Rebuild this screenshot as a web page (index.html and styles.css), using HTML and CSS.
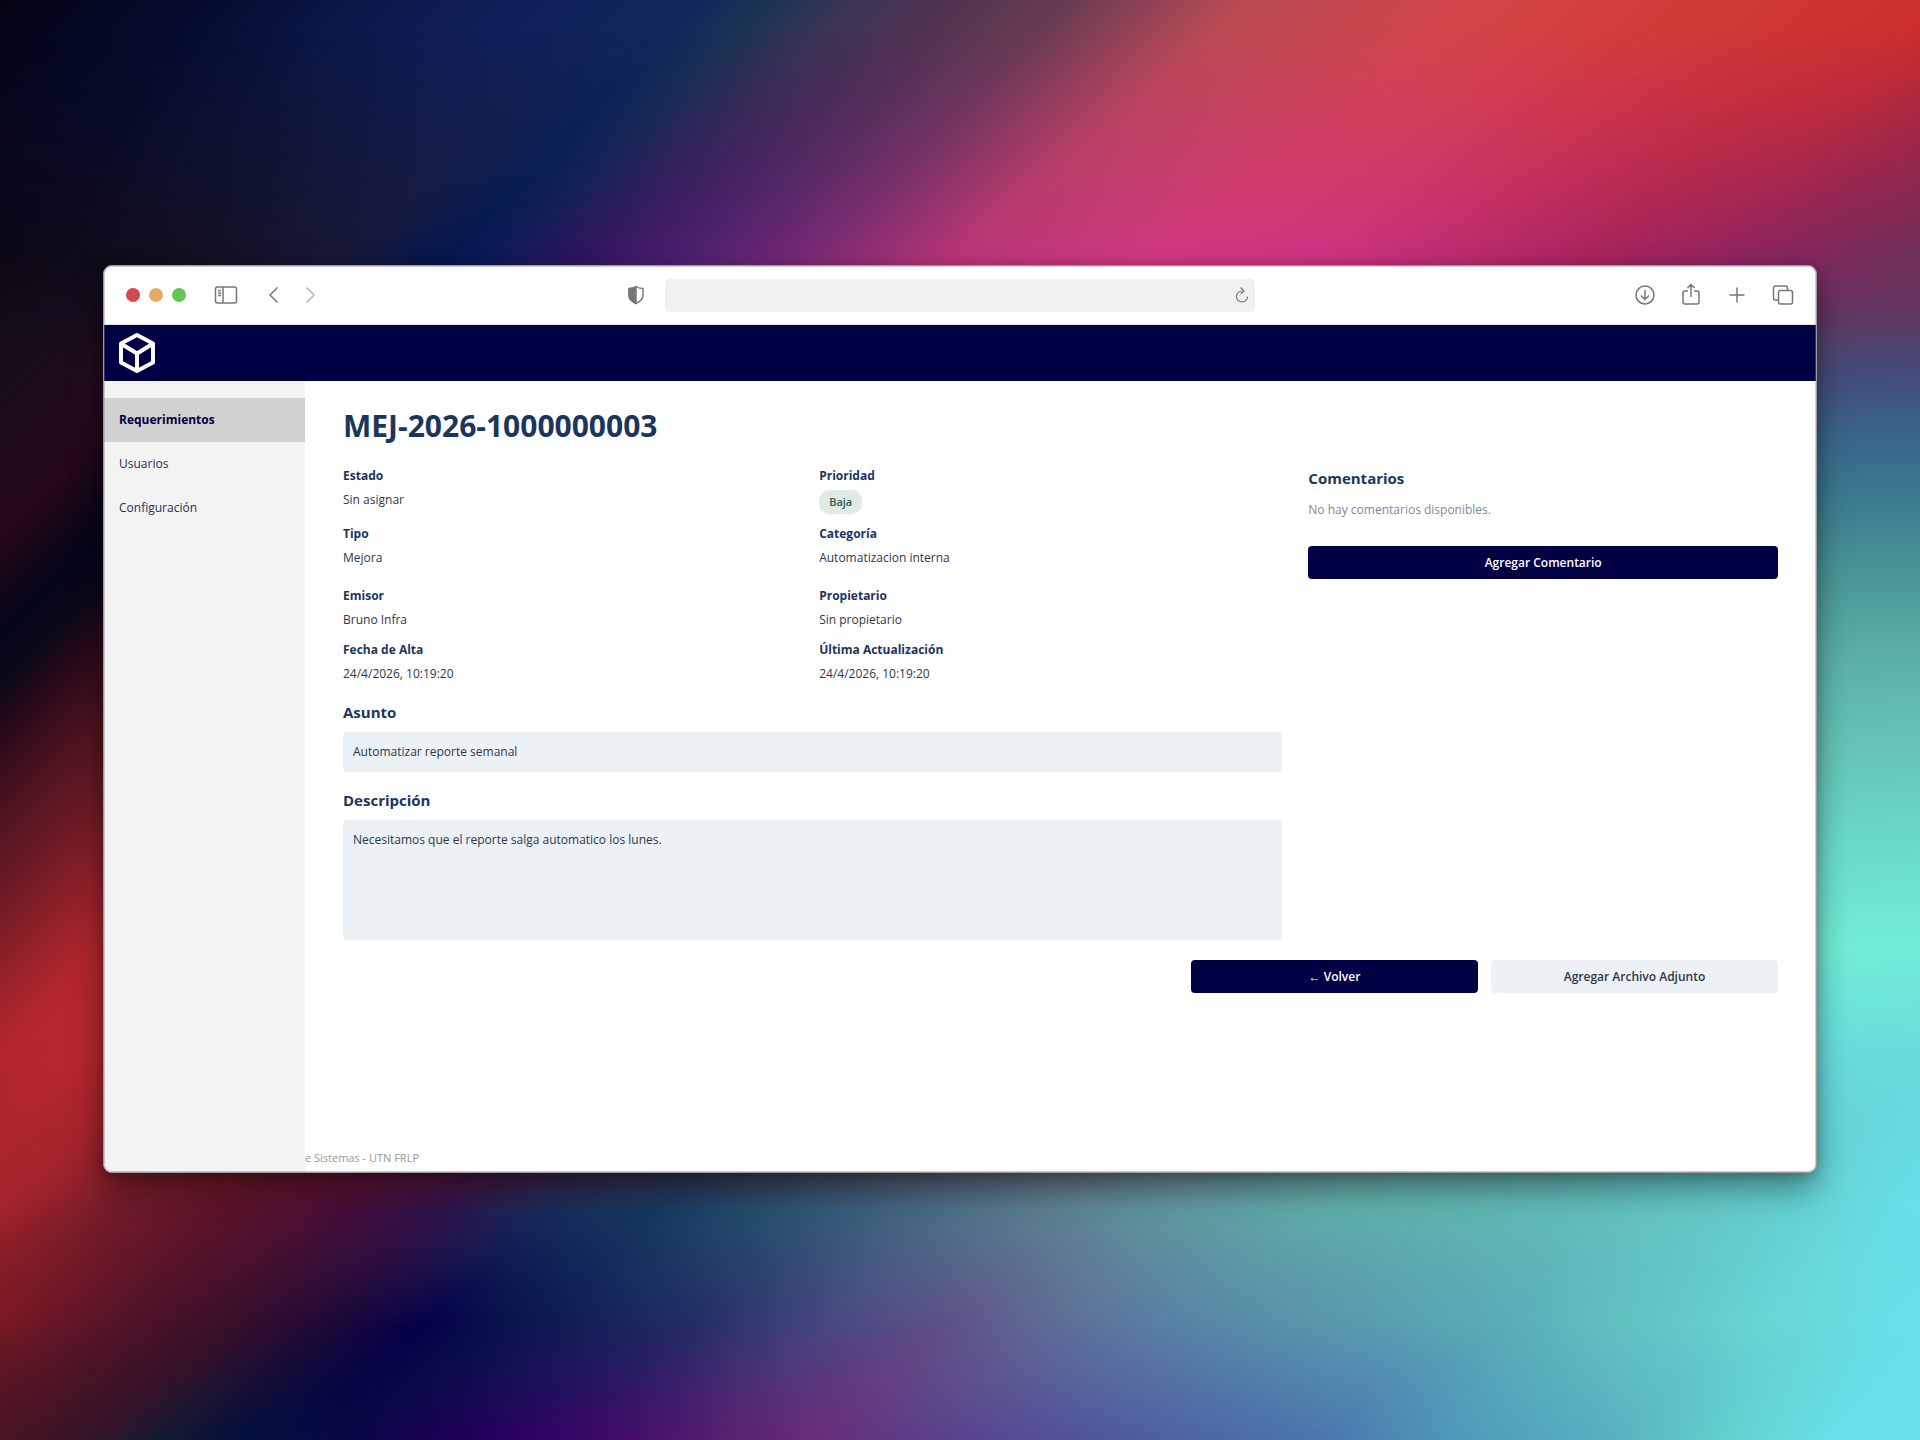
FILE: index.html
```
<!DOCTYPE html>
<html lang="es">
<head>
  <meta charset="UTF-8">
  <meta name="viewport" content="width=device-width, initial-scale=1.0">
  <title>MEJ-2026-1000000003</title>
  <link rel="stylesheet" href="styles.css">
</head>
<body>
  <div class="wallpaper">
    <div class="layer left"></div>
    <div class="layer right"></div>
    <div class="layer top-low"></div>
    <div class="layer top"></div>
    <div class="layer bottom-high"></div>
    <div class="layer bottom-mid"></div>
    <div class="layer bottom"></div>
  </div>

  <div class="window">
    <div class="toolbar">
      <div class="toolbar-left">
        <div class="lights">
          <span class="light red"></span>
          <span class="light yellow"></span>
          <span class="light green"></span>
        </div>
        <button class="icon-btn panel-btn" aria-label="Barra lateral">
          <svg width="24" height="20" viewBox="0 0 24 20"><rect x="1.500" y="2" width="21" height="16" rx="2"/><path d="M9 2v16M4 5.500h3M4 8h3M4 10.500h3"/></svg>
        </button>
        <button class="icon-btn back-btn" aria-label="Atrás">
          <svg width="12" height="20" viewBox="0 0 12 20"><path d="M9.500 2.500L2 10l7.500 7.500"/></svg>
        </button>
        <button class="icon-btn forward-btn" aria-label="Adelante">
          <svg width="12" height="20" viewBox="0 0 12 20"><path d="M2.500 2.500L10 10l-7.500 7.500"/></svg>
        </button>
        <button class="icon-btn shield-btn" aria-label="Privacidad">
          <svg width="18" height="20" viewBox="0 0 18 20"><path d="M9 1.500c2 1.500 4.500 2 7 2V10c0 4.500-3.500 7-7 8.500C5.500 17 2 14.500 2 10V3.500c2.500 0 5-.5 7-2z"/><path class="solid" d="M9 1.500v17C5.500 17 2 14.500 2 10V3.500c2.500 0 5-.5 7-2z"/></svg>
        </button>
      </div>
      <div class="address">
        <input type="text" aria-label="Dirección">
        <button class="icon-btn reload-btn" aria-label="Recargar">
          <svg width="18" height="18" viewBox="0 0 18 18"><path d="M9 5a5.500 5.500 0 1 0 5.500 5.500M7.500 1.500L11 5 7.500 8"/></svg>
        </button>
      </div>
      <div class="toolbar-right">
        <button class="icon-btn" aria-label="Descargas">
          <svg width="22" height="24" viewBox="0 0 22 24"><circle cx="11" cy="12" r="9"/><path d="M11 7v9M7 12.500l4 4 4-4"/></svg>
        </button>
        <button class="icon-btn" aria-label="Compartir">
          <svg width="22" height="24" viewBox="0 0 22 24"><path d="M8 8H5a2 2 0 0 0-2 2v9a2 2 0 0 0 2 2h12a2 2 0 0 0 2-2v-9a2 2 0 0 0-2-2h-3M11 14V2M7.500 5L11 1.500 14.500 5"/></svg>
        </button>
        <button class="icon-btn" aria-label="Nueva pestaña">
          <svg width="22" height="24" viewBox="0 0 22 24"><path d="M11 4.500v15M3.500 12h15"/></svg>
        </button>
        <button class="icon-btn" aria-label="Pestañas">
          <svg width="22" height="24" viewBox="0 0 22 24"><rect x="6.500" y="7.500" width="14" height="13.500" rx="2"/><path d="M6.500 17H3.500a2 2 0 0 1-2-2V5a2 2 0 0 1 2-2h10a2 2 0 0 1 2 2v2.500"/></svg>
        </button>
      </div>
    </div>

    <header class="app-header">
      <svg class="logo" width="40" height="44" viewBox="0 0 40 44"><path d="M20 4L36 12.500v19L20 40 4 31.500v-19zM4.500 13L20 22.500 35.500 13M20 22.500V40"/></svg>
    </header>

    <div class="app">
      <nav class="sidebar">
        <a href="#" class="active">Requerimientos</a>
        <a href="#">Usuarios</a>
        <a href="#">Configuración</a>
      </nav>

      <div class="page">
        <main class="content">
          <h1>MEJ-2026-1000000003</h1>

          <div class="columns">
            <div class="detail">
              <dl class="fields">
                <div class="field"><dt>Estado</dt><dd>Sin asignar</dd></div>
                <div class="field"><dt>Prioridad</dt><dd><span class="badge">Baja</span></dd></div>
                <div class="field spaced"><dt>Tipo</dt><dd>Mejora</dd></div>
                <div class="field spaced"><dt>Categoría</dt><dd>Automatizacion interna</dd></div>
                <div class="field"><dt>Emisor</dt><dd>Bruno Infra</dd></div>
                <div class="field"><dt>Propietario</dt><dd>Sin propietario</dd></div>
                <div class="field"><dt>Fecha de Alta</dt><dd>24/4/2026, 10:19:20</dd></div>
                <div class="field"><dt>Última Actualización</dt><dd>24/4/2026, 10:19:20</dd></div>
              </dl>

              <section class="block">
                <h2>Asunto</h2>
                <p class="box">Automatizar reporte semanal</p>
              </section>
              <section class="block">
                <h2>Descripción</h2>
                <p class="box tall">Necesitamos que el reporte salga automatico los lunes.</p>
              </section>
            </div>

            <section class="comments">
              <h2>Comentarios</h2>
              <p>No hay comentarios disponibles.</p>
              <button class="btn primary">Agregar Comentario</button>
            </section>
          </div>

          <div class="actions">
            <button class="btn primary">← Volver</button>
            <button class="btn secondary">Agregar Archivo Adjunto</button>
          </div>
        </main>
        <footer>e Sistemas - UTN FRLP</footer>
      </div>
    </div>
  </div>
</body>
</html>
```
FILE: styles.css
```
* {
  box-sizing: border-box;
}
body {
  margin: 0;
  min-height: 100vh;
  display: flex;
  align-items: center;
  padding: 0 103px 2px;
  font-family: 'Segoe UI', 'Open Sans', 'Noto Sans', sans-serif;
  font-size: 12px;
  line-height: 20px;
  color: #2d3748;
  background: #0a0a30;
}
h1, h2, p, dl, dd {
  margin: 0;
}
button, input {
  font: inherit;
  border: none;
}
button {
  cursor: pointer;
}

/* wallpaper: diagonal bands, blended from row to row */
.wallpaper, .layer {
  position: absolute;
  inset: 0;
}
.wallpaper {
  z-index: -1;
  overflow: hidden;
}
.left {
  background: linear-gradient(135deg, #160c1c 11%, #220a1c 14.5%, #240818 16%, #0c0618 18%, #04061a 19%, #0c0818 20.5%, #2a0a1a 22%, #501420 24.5%, #701c26 27%, #8a2028 28.5%, #b0262c 31%, #b8282e 34%, #a82428 36.5%);
}
.right {
  background: linear-gradient(178deg, #802a50 18%, #6a3060 22%, #564068 26%, #454a78 29%, #3a6488 33%, #3a7890 37%, #489494 42%, #5cb0a8 48%, #66c8b8 55%, #6adccc 61%, #72ecd4 67%, #6adfdc 73%, #68dde6 78%, #68e0ec 82%);
  mask-image: linear-gradient(90deg, transparent 40%, #000 90%);
}
.top-low {
  background: linear-gradient(135deg, #0c0614 7%, #12101f 13%, #181838 18%, #051850 21%, #101a58 22.5%, #301560 25%, #4c2070 28%, #702875 31%, #9a3075 34%, #b83678 36%, #cf3880 42%, #cb3480 47%, #bd2c72 51%, #a8245f 55%, #8a2560 60%, #6a3058 65%);
  mask-image: linear-gradient(#000 18%, transparent 24%);
}
.top {
  background: linear-gradient(135deg, #030312 0%, #040c30 6.5%, #0c1848 11%, #10205c 16%, #10285a 21%, #1c3354 23%, #3c3555 25.5%, #4d3350 28%, #6a3c52 32%, #9a4555 35%, #b84a52 37%, #d24548 44%, #d03a35 51%, #cc2f2c 58%, #b82830 61%, #a02040 66%);
  mask-image: linear-gradient(#000 2%, transparent 18%);
}
.bottom-high {
  background: linear-gradient(135deg, #a5242c 36%, #701c2a 39.5%, #5c1428 42.5%, #480f38 46%, #30124a 49%, #1a2a58 52%, #163a60 55.5%, #285270 59%, #486a85 63.5%, #5a8090 67%, #60959e 70.5%, #5fada8 75%, #62bdb8 83%, #65d0d0 89%, #68e0ea 93%);
  mask-image: linear-gradient(transparent 72%, #000 84%);
}
.bottom-mid {
  background: linear-gradient(135deg, #801a24 39%, #501428 43%, #3a1028 46%, #1c0838 49.5%, #04004a 52%, #08104c 54%, #142058 57%, #242c64 60%, #484880 64%, #5e5088 67.5%, #5e6a94 70.5%, #5880a4 74%, #5898ac 79%, #5aacb8 84%, #60c0c0 87.5%, #68d6d4 92%, #68e0ea 96%);
  mask-image: linear-gradient(transparent 84%, #000 92%);
}
.bottom {
  background: linear-gradient(135deg, #4a1420 42.5%, #35142a 45.5%, #151a30 47.5%, #02103c 50%, #080844 53%, #160050 55%, #2a0060 58%, #400a68 61%, #5a2070 64.5%, #6a2c78 67%, #5c3c88 70%, #544c98 73.5%, #4c60a4 77.5%, #4a74ae 82%, #4e98b8 86%, #58b2c0 91%, #62cfcc 94%, #68dfe6 97%);
  mask-image: linear-gradient(transparent 92%, #000);
}

.window {
  flex: 1;
  position: relative;
  border: 1px solid #9c9ca0;
  border-radius: 9px;
  overflow: hidden;
  background: #fff;
  box-shadow: 0 16px 32px rgba(0, 0, 0, 0.4), 0 2px 12px rgba(0, 0, 0, 0.2);
}
.window::after {
  content: '';
  position: absolute;
  inset: 0;
  border: 1px solid rgba(130, 130, 150, 0.4);
  border-radius: 8px;
  pointer-events: none;
}

.toolbar {
  display: grid;
  grid-template-columns: 1fr minmax(0, 590px) 1fr;
  align-items: center;
  height: 59px;
  padding: 0 22px;
  column-gap: 20px;
  border-bottom: 1px solid #e4e4e4;
}
.toolbar-left, .toolbar-right, .lights {
  display: flex;
  align-items: center;
}
.lights {
  gap: 9px;
}
.light {
  width: 14px;
  height: 14px;
  border-radius: 50%;
}
.red { background: #d34a4c; }
.yellow { background: #e5ab67; }
.green { background: #64c655; }
.icon-btn {
  display: flex;
  padding: 0;
  background: none;
}
.icon-btn svg {
  fill: none;
  stroke: #7a7678;
  stroke-width: 1.5;
  stroke-linejoin: round;
}
.icon-btn .solid {
  fill: #7a7678;
}
.panel-btn {
  margin-left: 28px;
}
.back-btn {
  margin-left: 30px;
}
.forward-btn {
  margin-left: 24px;
}
.forward-btn svg {
  stroke: #b5b5b5;
}
.shield-btn {
  margin-left: auto;
}
.reload-btn svg {
  stroke-width: 1.2;
}
.address {
  display: flex;
  align-items: center;
  height: 33px;
  padding-right: 4px;
  border-radius: 5px;
  background: #f1f1f1;
}
.address input {
  flex: 1;
  padding: 0 12px;
  background: none;
}
.toolbar-right {
  justify-content: flex-end;
  gap: 24px;
}

.app-header {
  display: flex;
  align-items: center;
  height: 56px;
  padding: 0 13px;
  background: #020044;
}
.logo {
  fill: none;
  stroke: #fff;
  stroke-width: 4;
  stroke-linejoin: round;
}

.app {
  display: flex;
  min-height: 791px;
}
.sidebar {
  width: 201px;
  padding-top: 17px;
  background: #f3f3f3;
}
.sidebar a {
  display: block;
  padding: 12px 15px;
  color: #2c2c54;
  text-decoration: none;
}
.sidebar .active {
  background: #d1d1d1;
  color: #020044;
  font-weight: 700;
}

.page {
  flex: 1;
  display: flex;
  flex-direction: column;
}
.content {
  padding: 25px 38px 24px;
}
h1 {
  margin-bottom: 20px;
  font-size: 30px;
  line-height: 40px;
  color: #1a365d;
}
h2 {
  font-size: 15px;
  line-height: 24px;
  color: #1a365d;
}
.columns {
  display: grid;
  grid-template-columns: 2fr 1fr;
  gap: 26px;
}
.fields {
  display: grid;
  grid-template-columns: 1fr 1fr;
  gap: 10px 13px;
}
.spaced {
  padding-bottom: 8px;
}
dt {
  margin-bottom: 4px;
  font-weight: 700;
  color: #1a365d;
}
.badge {
  display: inline-block;
  padding: 2px 10px;
  border-radius: 10px;
  background: #dfebe3;
  color: #2f5d5a;
  font-size: 11px;
  font-weight: 600;
  vertical-align: top;
}
.block {
  margin-top: 16px;
}
.box {
  margin-top: 8px;
  padding: 10px;
  border-radius: 4px;
  background: #ebf1f5;
}
.block .box {
  min-height: 38px;
}
.block .tall {
  min-height: 120px;
}
.comments p {
  margin: 10px 0 26px;
  color: #7b8a98;
}
.btn {
  height: 33px;
  border-radius: 4px;
  font-weight: 600;
}
.primary {
  background: #020044;
  color: #fff;
}
.secondary {
  background: #ebf1f5;
  color: #2d3748;
}
.comments .btn {
  width: 100%;
}
.actions {
  display: flex;
  justify-content: flex-end;
  gap: 13px;
  margin-top: 20px;
}
.actions .btn {
  width: 20%;
}
footer {
  margin-top: auto;
  padding-bottom: 4px;
  font-size: 11px;
  color: #999;
}
```
